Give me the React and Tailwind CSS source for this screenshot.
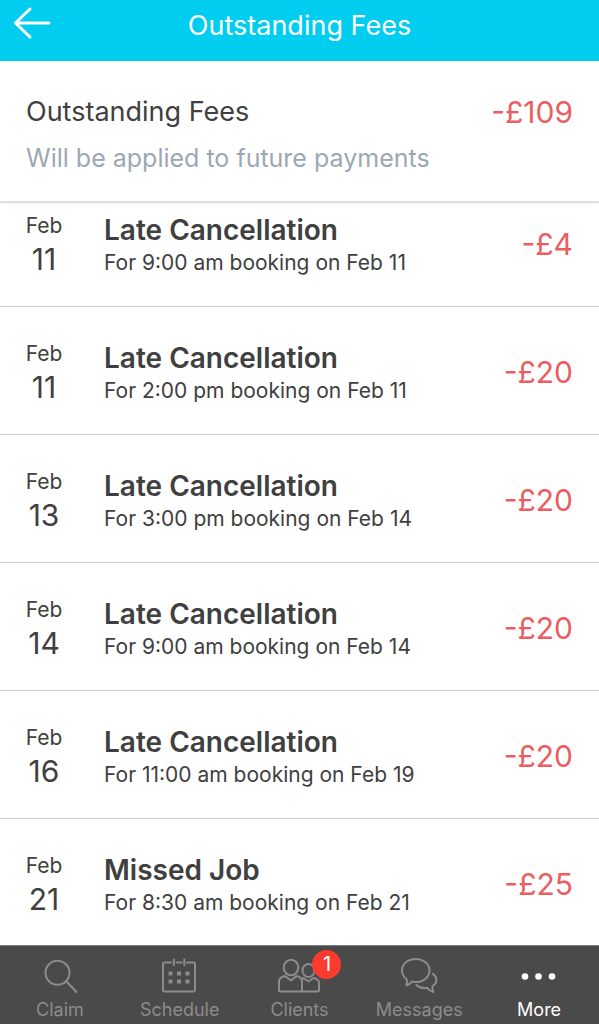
import React from "react";

const FEES = [
  { month: "Feb", day: "11", title: "Late Cancellation", detail: "For 9:00 am booking on Feb 11", amount: "-£4" },
  { month: "Feb", day: "11", title: "Late Cancellation", detail: "For 2:00 pm booking on Feb 11", amount: "-£20" },
  { month: "Feb", day: "13", title: "Late Cancellation", detail: "For 3:00 pm booking on Feb 14", amount: "-£20" },
  { month: "Feb", day: "14", title: "Late Cancellation", detail: "For 9:00 am booking on Feb 14", amount: "-£20" },
  { month: "Feb", day: "16", title: "Late Cancellation", detail: "For 11:00 am booking on Feb 19", amount: "-£20" },
  { month: "Feb", day: "21", title: "Missed Job", detail: "For 8:30 am booking on Feb 21", amount: "-£25" },
];

function Icon({ children }) {
  return (
    <svg
      viewBox="0 0 48 40"
      className="w-12 h-10"
      fill="none"
      stroke="currentColor"
      strokeWidth="2"
      strokeLinecap="round"
      strokeLinejoin="round"
      aria-hidden="true"
    >
      {children}
    </svg>
  );
}

const SearchIcon = () => (
  <Icon>
    <circle cx="21.5" cy="16.8" r="12" />
    <path d="M30.2 25.3 40.5 36" />
  </Icon>
);

const CalendarIcon = () => (
  <Icon>
    <path d="M15 6.5H8.5A1.5 1.5 0 0 0 7 8v26a1.5 1.5 0 0 0 1.5 1.5h29A1.5 1.5 0 0 0 39 34V8a1.5 1.5 0 0 0-1.5-1.5H31M20.5 6.5h5M17.8 3.5V9M28.3 3.5V9" />
    <g fill="currentColor" stroke="none">
      <path d="M12.5 15.5h4v4h-4zM21 15.5h4v4h-4zM29.5 15.5h4v4h-4zM12.5 23.5h4v4h-4zM21 23.5h4v4h-4zM29.5 23.5h4v4h-4z" />
    </g>
  </Icon>
);

const ClientsIcon = () => (
  <Icon>
    <ellipse cx="16" cy="11.5" rx="7.3" ry="7.8" />
    <path d="M10 20c-4 .8-6 2.3-6 5.5V34c0 1 .5 1.5 1.5 1.5h20c1 0 1.500-.5 1.500-1.500v-8.500c0-3.200-2-4.700-5.500-5.500L16 24.5z" />
    <ellipse cx="33.5" cy="14.5" rx="6" ry="6.500" />
    <path d="m27.5 22.8 1-.8 5 3.500 5-3.500c3.500.7 5.500 2 5.500 5v7c0 1-.5 1.500-1.500 1.500H25.500" />
  </Icon>
);

const MessagesIcon = () => (
  <Icon>
    <path d="M11.5 23C8.5 21 7 18 7 14.5 7 8 13 3 20.7 3S34.500 8 34.500 14.500 28.500 26 21 26c-1.500 0-2.500-.2-4-.5-1.700 2-3.500 3.300-5.500 4 .7-2 .7-4.500 0-6.500z" />
    <path d="M37.8 17.8c5 3.700 4.700 9.200-.3 12.200-.3 2.500 0 4 .8 6-2.800-.7-4.300-2-6-4.200-4.300.8-8.300-.3-11-2.800" />
  </Icon>
);

const MoreIcon = () => (
  <Icon>
    <g fill="currentColor" stroke="none">
      <circle cx="10" cy="20.5" r="3.3" />
      <circle cx="23.5" cy="20.5" r="3.3" />
      <circle cx="37" cy="20.5" r="3.3" />
    </g>
  </Icon>
);

const TABS = [
  { label: "Claim", icon: SearchIcon },
  { label: "Schedule", icon: CalendarIcon },
  { label: "Clients", icon: ClientsIcon, badge: 1 },
  { label: "Messages", icon: MessagesIcon },
  { label: "More", icon: MoreIcon, active: true },
];

function Header() {
  return (
    <header className="grid grid-cols-[64px_1fr_64px] h-[61px] bg-[#00cdef] text-white">
      <button type="button" aria-label="Back" className="flex pt-1 pl-3">
        <svg
          viewBox="0 0 40 38"
          className="w-10 h-[38px]"
          fill="none"
          stroke="currentColor"
          strokeWidth="3"
          strokeLinecap="round"
          strokeLinejoin="round"
          aria-hidden="true"
        >
          <path d="M18 5 3.5 19 18 33M3.5 19H37" />
        </svg>
      </button>
      <h1 className="pt-2 text-center text-[27px] leading-9">Outstanding Fees</h1>
    </header>
  );
}

function Summary() {
  return (
    <section className="flex justify-between pt-8 pb-7 px-[26px] border-b-2 border-[#dedede] shadow-xs">
      <div>
        <h2 className="text-[27px] leading-[38px]">Outstanding Fees</h2>
        <p className="mt-3 text-[25px] leading-[30px] text-[#9ba8b4]">Will be applied to future payments</p>
      </div>
      <p className="text-[30px] leading-[38px] text-[#ea5e62]">-£109</p>
    </section>
  );
}

function FeeRow({ fee }) {
  return (
    <li className="flex items-center pt-8 pb-[29px] px-[26px] border-b border-[#cfcfcf] first:pt-2 last:pb-7 last:border-b-0">
      <div className="w-[78px] shrink-0">
        <div className="w-9 flex flex-col items-center">
          <span className="text-[21px] leading-[30px]">{fee.month}</span>
          <span className="text-[30px] leading-9">{fee.day}</span>
        </div>
      </div>
      <div className="flex-1">
        <h3 className="text-[28px] leading-[38px] font-semibold">{fee.title}</h3>
        <p className="text-[21px] leading-7">{fee.detail}</p>
      </div>
      <span className="text-[30px] leading-[38px] text-[#ea5e62]">{fee.amount}</span>
    </li>
  );
}

function TabBar() {
  return (
    <nav className="sticky bottom-0 grid grid-cols-5 h-[79px] pt-2.5 bg-[#4a4a4a] border-t border-[#7c7c7c]">
      {TABS.map(({ label, icon: TabIcon, badge, active }) => (
        <a
          key={label}
          href="#"
          aria-current={active ? "page" : undefined}
          className={`flex flex-col items-center ${active ? "text-white" : "text-[#8c8c8c]"}`}
        >
          <span className="relative">
            <TabIcon />
            {badge && (
              <span className="absolute -top-1.5 -right-[18px] w-[29px] h-[29px] rounded-full bg-[#fb3a30] text-white text-xl leading-[29px] text-center">
                {badge}
              </span>
            )}
          </span>
          <span className="text-[18px] leading-7">{label}</span>
        </a>
      ))}
    </nav>
  );
}

export default function App() {
  return (
    <div className="min-h-screen flex flex-col bg-white text-[#404040] font-['Inter',sans-serif]">
      <Header />
      <Summary />
      <ul className="flex-1">
        {FEES.map((fee, i) => (
          <FeeRow key={i} fee={fee} />
        ))}
      </ul>
      <TabBar />
    </div>
  );
}
